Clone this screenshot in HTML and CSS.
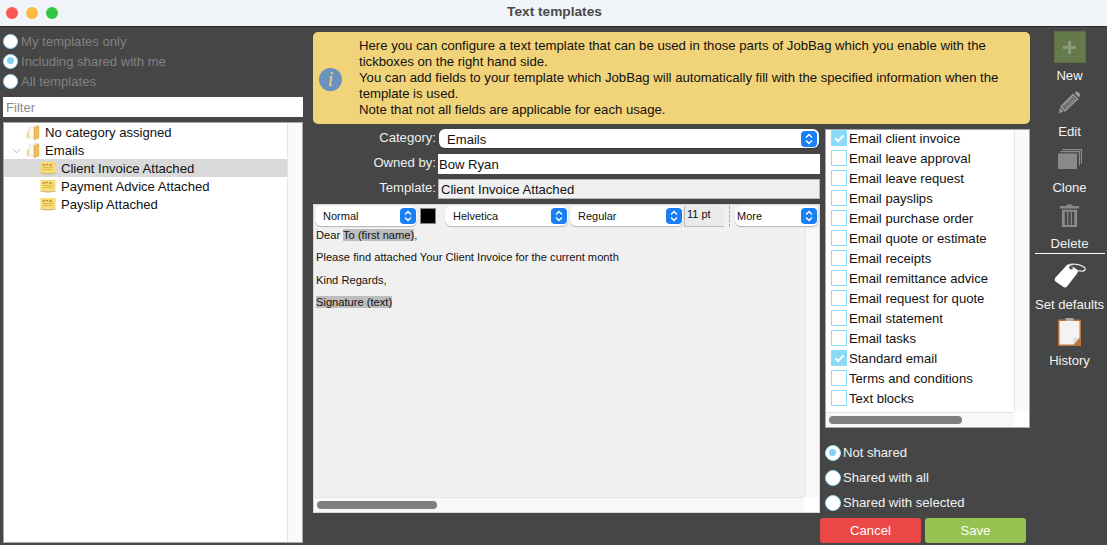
FILE: index.html
```html
<!DOCTYPE html>
<html lang="en">
<head>
<meta charset="UTF-8">
<title>Text templates</title>
<link rel="stylesheet" href="styles.css">
</head>
<body>
<svg class="defs" width="0" height="0">
  <symbol id="folder" viewBox="0 0 14 15">
    <path d="M0.5 14 L3 12.5 V5 L0.5 8 Z" fill="#f0d9a8"/>
    <path d="M3 13 H12.5 V0.5 H8.5 L7.5 2 H3 Z" fill="#fbf8ee" stroke="#d8d0bc" stroke-width=".5"/>
    <path d="M8 14.8 L12.8 13 V0.8 L8 2.6 Z" fill="#efbd5c" stroke="#cf9a3c" stroke-width=".5"/>
  </symbol>
  <symbol id="note" viewBox="0 0 16 14">
    <path d="M0.5 1 H15.5 V12 Q8 13.5 0.5 12 Z" fill="#f7dc72"/>
    <path d="M0.5 11.5 Q8 13.2 15.5 11.5 V12.5 Q8 14.3 0.5 12.5 Z" fill="#c2b48a"/>
    <path d="M3 6.5 H13 M3 8.5 H12" stroke="#e0b84e" stroke-width="1"/>
    <path d="M2.5 4 H5.5 M6.5 3.5 H8 M9 4 H12" stroke="#b5623c" stroke-width="1"/>
  </symbol>
  <symbol id="chevrons" viewBox="0 0 16 16">
    <rect width="16" height="16" rx="4" fill="#1a7ef5"/>
    <path d="M5 6.5 L8 3.5 L11 6.5 M5 9.5 L8 12.5 L11 9.5" fill="none" stroke="#fff" stroke-width="1.4"/>
  </symbol>
</svg>

<div class="window">
  <div class="titlebar">
    <span class="light red"></span>
    <span class="light yellow"></span>
    <span class="light green"></span>
    <span class="title">Text templates</span>
  </div>

  <div class="body">
    <div class="sidebar">
      <div class="radios-top">
        <div class="radio-row muted"><span class="radio"></span>My templates only</div>
        <div class="radio-row muted"><span class="radio on"></span>Including shared with me</div>
        <div class="radio-row muted"><span class="radio"></span>All templates</div>
      </div>
      <div class="filter">Filter</div>
      <div class="tree">
        <div class="tree-list">
          <div class="tree-row level1"><svg class="folder"><use href="#folder"/></svg>No category assigned</div>
          <div class="tree-row level1">
            <svg class="twisty" viewBox="0 0 10 6"><path d="M1 1 L5 5 L9 1" fill="none" stroke="#aaa" stroke-width="1"/></svg>
            <svg class="folder"><use href="#folder"/></svg>Emails
          </div>
          <div class="tree-row level2 selected"><svg class="note"><use href="#note"/></svg>Client Invoice Attached</div>
          <div class="tree-row level2"><svg class="note"><use href="#note"/></svg>Payment Advice Attached</div>
          <div class="tree-row level2"><svg class="note"><use href="#note"/></svg>Payslip Attached</div>
        </div>
        <div class="tree-gutter"></div>
      </div>
    </div>

    <div class="content">
      <div class="banner">
        <div class="info-icon">i</div>
        <p>Here you can configure a text template that can be used in those parts of JobBag which you enable with the tickboxes on the right hand side.<br>
        You can add fields to your template which JobBag will automatically fill with the specified information when the template is used.<br>
        Note that not all fields are applicable for each usage.</p>
      </div>

      <div class="columns">
        <div class="form-col">
          <div class="form-row">
            <label>Category:</label>
            <div class="select category">Emails<svg class="chev"><use href="#chevrons"/></svg></div>
          </div>
          <div class="form-row">
            <label>Owned by:</label>
            <div class="field">Bow Ryan</div>
          </div>
          <div class="form-row">
            <label>Template:</label>
            <div class="field readonly">Client Invoice Attached</div>
          </div>

          <div class="editor">
            <div class="toolbar">
              <div class="select tb-normal">Normal<svg class="chev"><use href="#chevrons"/></svg></div>
              <span class="swatch"></span>
              <div class="select tb-font">Helvetica<svg class="chev"><use href="#chevrons"/></svg></div>
              <div class="select tb-weight">Regular<svg class="chev"><use href="#chevrons"/></svg></div>
              <div class="size">11 pt</div>
              <span class="tb-sep"></span>
              <div class="select tb-more">More<svg class="chev"><use href="#chevrons"/></svg></div>
            </div>
            <div class="editor-main">
              <div class="editor-text">
                <p>Dear <span class="token">To (first name)</span>,</p>
                <p>Please find attached Your Client Invoice for the current month</p>
                <p>Kind Regards,</p>
                <p><span class="token">Signature (text)</span></p>
              </div>
              <div class="v-gutter"></div>
            </div>
            <div class="h-scroll"><span class="thumb editor-thumb"></span><span class="corner"></span></div>
          </div>
        </div>

        <div class="usage-col">
          <div class="usage">
            <div class="usage-main">
              <div class="usage-list">
                <div class="check-row"><span class="check on"></span>Email client invoice</div>
                <div class="check-row"><span class="check"></span>Email leave approval</div>
                <div class="check-row"><span class="check"></span>Email leave request</div>
                <div class="check-row"><span class="check"></span>Email payslips</div>
                <div class="check-row"><span class="check"></span>Email purchase order</div>
                <div class="check-row"><span class="check"></span>Email quote or estimate</div>
                <div class="check-row"><span class="check"></span>Email receipts</div>
                <div class="check-row"><span class="check"></span>Email remittance advice</div>
                <div class="check-row"><span class="check"></span>Email request for quote</div>
                <div class="check-row"><span class="check"></span>Email statement</div>
                <div class="check-row"><span class="check"></span>Email tasks</div>
                <div class="check-row"><span class="check on"></span>Standard email</div>
                <div class="check-row"><span class="check"></span>Terms and conditions</div>
                <div class="check-row"><span class="check"></span>Text blocks</div>
              </div>
              <div class="v-gutter"></div>
            </div>
            <div class="h-scroll"><span class="thumb usage-thumb"></span><span class="corner"></span></div>
          </div>
          <div class="share">
            <div class="radio-row"><span class="radio on"></span>Not shared</div>
            <div class="radio-row"><span class="radio"></span>Shared with all</div>
            <div class="radio-row"><span class="radio"></span>Shared with selected</div>
          </div>
          <div class="buttons">
            <div class="btn cancel">Cancel</div>
            <div class="btn save">Save</div>
          </div>
        </div>
      </div>
    </div>

    <div class="tools">
      <div class="new-box"><svg viewBox="0 0 16 16"><path d="M8 1 V15 M1 8 H15" stroke="#8b9a7d" stroke-width="3.4"/></svg></div>
      <div class="tool-label new-label">New</div>
      <svg class="tool-icon edit-icon" viewBox="0 0 23 23">
        <path d="M0.5 22.5 L2 16.5 L5.5 20.5 Z" fill="#8f8f8f"/>
        <path d="M3 15.5 L15 3.5 L19.5 8 L7 20 Z" fill="#6a6a6a" stroke="#9a9a9a" stroke-width="1.4"/>
        <path d="M6 14.5 L14.5 6 M8 16.5 L16.5 8" stroke="#9a9a9a" stroke-width="1"/>
        <path d="M16.5 2 L18 0.7 Q19 0.2 20 1 L22 3 Q22.8 4 22 5 L20.8 6.5 Z" fill="#9a9a9a"/>
      </svg>
      <div class="tool-label edit-label">Edit</div>
      <svg class="tool-icon clone-icon" viewBox="0 0 24 20">
        <path d="M4 0 H24 V14.5 H22.8 V1.2 H4 Z M2 2 H22 V16.5 H20.8 V3.2 H2 Z" fill="#8a8a8a"/>
        <rect x="0" y="4.5" width="19" height="15.5" fill="#8a8a8a"/>
      </svg>
      <div class="tool-label clone-label">Clone</div>
      <svg class="tool-icon trash-icon" viewBox="0 0 20 24">
        <path d="M7 2 V0.5 H13 V2 H20 V4.5 H0 V2 Z" fill="#8a8a8a"/>
        <path d="M2 6 H18 V24 H2 Z M5 8 V22 H7.5 V8 Z M8.8 8 V22 H11.3 V8 Z M12.6 8 V22 H15 V8 Z" fill="#8a8a8a" fill-rule="evenodd"/>
      </svg>
      <div class="tool-label delete-label">Delete</div>
      <div class="tool-rule"></div>
      <svg class="tool-icon tag-icon" viewBox="0 0 32 25">
        <path d="M1 15 L13 2 Q14.5 0.8 16 1.5 L23 6.5 Q24.5 8 23.5 10 L13 23.5 Q11.5 25 9.5 24 L1.5 18.5 Q0 17 1 15 Z" fill="#fff"/>
        <path d="M16 1.5 Q24 0 30 4 Q33 7 29 8 Q24 9 18 5" fill="none" stroke="#e6e6e6" stroke-width="1.3"/>
        <circle cx="17" cy="4.5" r="2" fill="#555"/>
      </svg>
      <div class="tool-label defaults-label">Set defaults</div>
      <svg class="tool-icon clip-icon" viewBox="0 0 23 28">
        <rect x="0" y="1.5" width="23" height="26.5" fill="#b8743a"/>
        <path d="M1.5 3 H21.5 V20 L15.5 26.5 H1.5 Z" fill="#f3f3f3"/>
        <path d="M15.5 26.5 L21.5 20 H15.5 Z" fill="#d8d8d8"/>
        <rect x="7.5" y="0" width="8" height="3" fill="#aaa"/>
      </svg>
      <div class="tool-label history-label">History</div>
    </div>
  </div>
</div>
</body>
</html>
```

FILE: styles.css
```css
html, body {
  margin: 0;
  padding: 0;
  height: 100%;
}
body {
  font-family: "Liberation Sans", Arial, sans-serif;
  font-size: 13.1px;
  color: #111;
  background-color: #464646;
  overflow: hidden;
}
.defs {
  position: absolute;
}
.window {
  width: 1107px;
  height: 545px;
  display: flex;
  flex-direction: column;
}
.titlebar {
  height: 27px;
  box-sizing: border-box;
  flex: none;
  display: flex;
  align-items: center;
  padding-left: 6px;
  gap: 8px;
  background-color: #f1f4f8;
  border-bottom: 1px solid #2a2a2a;
  position: relative;
}
.light {
  width: 12px;
  height: 12px;
  border-radius: 50%;
}
.red { background-color: #fc5753; }
.yellow { background-color: #fdbc40; }
.green { background-color: #33c748; }
.title {
  position: absolute;
  left: 2px;
  right: 0;
  top: 4px;
  text-align: center;
  font-weight: bold;
  font-size: 13.7px;
  color: #4a4a4a;
}
.body {
  flex: 1;
  display: flex;
  min-height: 0;
}

/* left side */
.sidebar {
  width: 306px;
  flex: none;
  padding: 4px 0 2px 3px;
  box-sizing: border-box;
  display: flex;
  flex-direction: column;
}
.radio-row {
  display: flex;
  align-items: center;
  gap: 3px;
  color: #f2f2f2;
}
.muted {
  color: #828282;
}
.radio {
  width: 15px;
  height: 15px;
  box-sizing: border-box;
  border-radius: 50%;
  background-color: #fff;
  border: 1.5px solid #9adcf5;
  flex: none;
  position: relative;
}
.radio.on::after {
  content: "";
  position: absolute;
  left: 2.5px;
  top: 2.5px;
  width: 7px;
  height: 7px;
  border-radius: 50%;
  background-color: #7fd3f7;
}
.radios-top .radio-row {
  height: 20px;
}
.filter {
  margin-top: 6px;
  width: 300px;
  height: 20px;
  box-sizing: border-box;
  background-color: #fff;
  color: #8a8a8a;
  padding: 3px 0 0 3px;
}
.tree {
  margin-top: 5px;
  width: 300px;
  flex: 1;
  display: flex;
  background-color: #fff;
  border: 1px solid #a8a8a8;
  box-sizing: border-box;
}
.tree-list {
  flex: 1;
}
.tree-gutter, .v-gutter {
  width: 15px;
  box-sizing: border-box;
  flex: none;
  background-color: #fafafa;
  border-left: 1px solid #e6e6e6;
}
.tree-row {
  height: 18px;
  display: flex;
  align-items: center;
  white-space: nowrap;
  position: relative;
}
.level1 { padding-left: 22px; }
.level2 { padding-left: 36px; }
.selected { background-color: #d9d9d9; }
.folder {
  width: 14px;
  height: 15px;
  margin-right: 5px;
}
.note {
  width: 16px;
  height: 14px;
  margin-right: 5px;
}
.twisty {
  position: absolute;
  left: 8px;
  top: 7px;
  width: 9px;
  height: 6px;
}

/* middle */
.content {
  width: 717px;
  flex: none;
  margin-left: 7px;
  padding-top: 5px;
}
.banner {
  height: 92px;
  box-sizing: border-box;
  background-color: #f1d37a;
  border-radius: 5px;
  display: flex;
  padding: 6px 20px 0 6px;
}
.banner p {
  margin: 0;
  line-height: 16px;
  font-size: 13.17px;
}
.info-icon {
  width: 23px;
  height: 23px;
  flex: none;
  margin: 30px 17px 0 0;
  border-radius: 50%;
  background-color: #6b92bd;
  color: #f1d37a;
  font-family: "Liberation Serif", serif;
  font-style: italic;
  font-size: 20px;
  line-height: 23px;
  text-align: center;
}
.columns {
  display: flex;
  gap: 5px;
  margin-top: 5px;
}
.form-col {
  width: 507px;
  flex: none;
}
.form-row {
  display: flex;
  align-items: center;
  height: 20px;
  margin-bottom: 5px;
}
.form-row label {
  width: 125px;
  flex: none;
  text-align: right;
  color: #eee;
  margin-top: -3px;
  padding-right: 2px;
  box-sizing: border-box;
}
.field {
  flex: 1;
  height: 20px;
  box-sizing: border-box;
  background-color: #fff;
  padding: 3px 0 0 1px;
}
.readonly {
  background-color: #f0f0f0;
  border: 1px solid #b5b5b5;
  padding: 2px 0 0 2px;
}
.select {
  position: relative;
  background-color: #fff;
  border-radius: 6px;
  box-shadow: 0 1px 1px rgba(0, 0, 0, 0.25);
  box-sizing: border-box;
  display: flex;
  align-items: center;
  font-size: 11px;
}
.chev {
  position: absolute;
  right: 2px;
  top: 2px;
  width: 16px;
  height: 16px;
}
.category {
  flex: 1;
  height: 19px;
  font-size: 13.1px;
  padding: 1px 0 0 8px;
  margin: -1px 1px 0 1px;
}
.editor {
  height: 309px;
  box-sizing: border-box;
  background-color: #f0f0f0;
  border: 1px solid #d8d8d8;
  display: flex;
  flex-direction: column;
}
.toolbar {
  height: 23px;
  flex: none;
  display: flex;
  align-items: flex-start;
  padding-top: 1px;
  box-sizing: border-box;
}
.toolbar .select {
  height: 20px;
}
.toolbar .chev {
  top: 2px;
  right: 1px;
}
.tb-normal {
  width: 102px;
  margin-left: 1px;
  padding-left: 8px;
}
.swatch {
  width: 16px;
  height: 16px;
  background-color: #000;
  border: 1px solid #888;
  box-sizing: border-box;
  margin: 2px 0 0 3px;
  flex: none;
}
.tb-font {
  width: 123px;
  margin-left: 9px;
  padding-left: 8px;
}
.tb-weight {
  width: 113px;
  margin-left: 2px;
  padding-left: 8px;
}
.size {
  width: 40px;
  height: 21px;
  box-sizing: border-box;
  margin-left: 1px;
  border-left: 1px solid #bbb;
  border-bottom: 1px solid #bbb;
  padding: 2px 0 0 2px;
  font-size: 11px;
  flex: none;
  background-color: #eaeaea;
}
.tb-sep {
  width: 0;
  height: 21px;
  margin-left: 5px;
  border-left: 1px dashed #aaa;
  flex: none;
}
.tb-more {
  width: 83px;
  margin-left: 5px;
  padding-left: 2px;
}
.editor-main {
  flex: 1;
  display: flex;
  min-height: 0;
}
.editor-text {
  flex: 1;
  padding: 1px 0 0 2px;
  font-size: 11.15px;
}
.editor-text p {
  margin: 0 0 9.8px;
  line-height: 12.5px;
}
.token {
  background-color: #bdbdbd;
}
.editor .v-gutter {
  width: 14px;
  background-color: #f8f8f8;
}
.h-scroll {
  height: 15px;
  flex: none;
  background-color: #f8f8f8;
  border-top: 1px solid #e4e4e4;
  box-sizing: border-box;
  display: flex;
  padding-left: 3px;
}
.thumb {
  height: 8px;
  margin-top: 3px;
  border-radius: 4px;
  background-color: #7f7f7f;
}
.corner {
  width: 15px;
  margin: -1px 0 0 auto;
  background-color: #fff;
}
.editor-thumb { width: 120px; }
.usage-thumb { width: 133px; }

/* tickbox list and share options */
.usage-col {
  width: 205px;
  flex: none;
  display: flex;
  flex-direction: column;
}
.usage {
  height: 299px;
  box-sizing: border-box;
  background-color: #fff;
  border: 1px solid #a8a8a8;
  display: flex;
  flex-direction: column;
}
.usage-main {
  flex: 1;
  display: flex;
  min-height: 0;
  overflow: hidden;
}
.usage-list {
  flex: 1;
  margin-top: -2px;
}
.check-row {
  height: 20px;
  display: flex;
  align-items: center;
  white-space: nowrap;
  padding-left: 5px;
}
.check {
  width: 16px;
  height: 16px;
  box-sizing: border-box;
  border: 1px solid #8fdcf8;
  background-color: #fff;
  margin-right: 2px;
  flex: none;
  position: relative;
}
.check.on {
  background-color: #8adaf8;
}
.check.on::after {
  content: "";
  position: absolute;
  left: 5px;
  top: 2px;
  width: 3px;
  height: 7px;
  border: solid #fff;
  border-width: 0 2px 2px 0;
  transform: rotate(45deg);
}
.share {
  margin-top: 12px;
}
.share .radio-row {
  height: 25px;
  gap: 2px;
}
.share .radio {
  width: 16px;
  height: 16px;
}
.share .radio.on::after {
  left: 3px;
  top: 3px;
}
.buttons {
  display: flex;
  gap: 4px;
  margin: 3px 0 0 -5px;
}
.btn {
  width: 101px;
  height: 25px;
  border-radius: 3px;
  color: #fff;
  text-align: center;
  line-height: 25px;
}
.cancel { background-color: #ec4747; }
.save { background-color: #96c251; }

/* right toolbar */
.tools {
  flex: 1;
  display: flex;
  flex-direction: column;
  align-items: center;
  padding-top: 4px;
  padding-left: 2px;
}
.new-box {
  width: 32px;
  height: 32px;
  flex: none;
  box-sizing: border-box;
  background-color: #647a4b;
  border: 1px solid #5a6b46;
  display: flex;
  align-items: center;
  justify-content: center;
}
.new-box svg {
  width: 15px;
  height: 15px;
}
.tool-label {
  color: #f2f2f2;
  line-height: 15px;
  white-space: nowrap;
  flex: none;
}
.new-label { margin-top: 5px; }
.tool-icon {
  display: block;
  flex: none;
}
.edit-icon { width: 23px; height: 23px; margin-top: 8px; }
.edit-label { margin-top: 10px; }
.clone-icon { width: 24px; height: 20px; margin-top: 10px; }
.clone-label { margin-top: 11px; }
.trash-icon { width: 19px; height: 23px; margin-top: 9px; }
.delete-label { margin-top: 9px; }
.tool-rule {
  width: 70px;
  height: 1px;
  flex: none;
  background-color: #fff;
  margin-top: 2px;
}
.tag-icon { width: 32px; height: 25px; margin-top: 9px; }
.defaults-label { margin-top: 9px; }
.clip-icon { width: 23px; height: 28px; margin-top: 6px; }
.history-label { margin-top: 7px; }
```
